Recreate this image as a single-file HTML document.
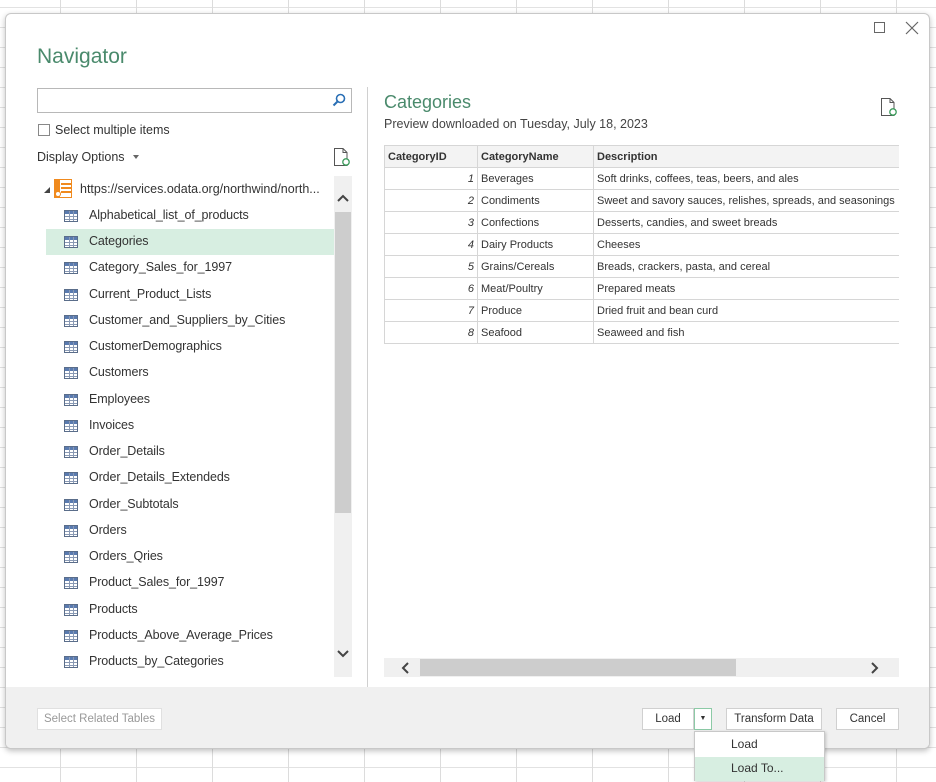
<!DOCTYPE html>
<html><head><meta charset="utf-8"><style>
*{margin:0;padding:0;box-sizing:border-box}
body{width:936px;height:782px;overflow:hidden;font-family:"Liberation Sans",sans-serif;color:#333;
background-color:#fff;
background-image:linear-gradient(90deg,#dcdcdc 1px,transparent 1px),linear-gradient(#e2e2e2 1px,transparent 1px);
background-size:76px 20px;background-position:60px 7px;position:relative}
.dlg{position:absolute;left:5px;top:13px;width:925px;height:736px;background:#fff;border:1px solid #c8c8c8;border-radius:6px;box-shadow:0 2px 6px rgba(0,0,0,.25);overflow:hidden}
.abs{position:absolute}
.foot{position:absolute;left:0;top:673px;width:100%;height:63px;background:#f0f0f0}
.t{font-size:12.5px;white-space:nowrap}
.item{position:absolute;left:40px;width:288px;height:26px}
.item .ic{position:absolute;left:18px;top:7px;width:14px;height:12px;border:1px solid #5a6d8a;background:
linear-gradient(90deg,transparent 4px,#8a9ab5 4px,#8a9ab5 5px,transparent 5px,transparent 8px,#8a9ab5 8px,#8a9ab5 9px,transparent 9px),
linear-gradient(#5a7bb0 3px,transparent 3px,transparent 5px,#8a9ab5 5px,#8a9ab5 6px,transparent 6px,transparent 8px,#8a9ab5 8px,#8a9ab5 9px,transparent 9px),#fff}
.item .tx{position:absolute;left:43px;top:5px;font-size:12.5px;color:#333;letter-spacing:-0.1px}
table{border-collapse:collapse;font-size:11px;position:absolute;left:378px;top:131px}
td{border:1px solid #d6d6d6;height:22px;padding:0 3px;white-space:nowrap}
th{border:1px solid #d6d6d6;height:22px;padding:0 3px;text-align:left;font-weight:bold;background:#f3f3f3;font-size:11px}
.btn{position:absolute;height:22px;border:1px solid #d0d0d0;background:#fff;font-size:11.5px;text-align:center;line-height:20px}
</style></head><body>
<div class="dlg">
<div class="abs" style="left:31px;top:31px;font-size:21px;color:#4a8a6c">Navigator</div>
<div class="abs" style="left:868px;top:8px;width:11px;height:11px;border:1px solid #666"></div>
<svg class="abs" style="left:899px;top:7px" width="14" height="14"><path d="M1 1L13 13M13 1L1 13" stroke="#666" stroke-width="1.2"/></svg>
<div class="abs" style="left:31px;top:74px;width:315px;height:25px;border:1px solid #b8b8b8"></div>
<svg class="abs" style="left:326px;top:79px" width="14" height="14"><circle cx="8.5" cy="5.5" r="4" fill="none" stroke="#2a6fb5" stroke-width="1.6"/><path d="M6 8L1.5 12.5" stroke="#2a6fb5" stroke-width="2"/></svg>
<div class="abs" style="left:32px;top:110px;width:12px;height:12px;border:1px solid #888"></div>
<div class="abs t" style="left:49px;top:109px">Select multiple items</div>
<div class="abs t" style="left:31px;top:136px">Display Options</div>
<div class="abs" style="left:127px;top:141px;border:3px solid transparent;border-top:4px solid #666"></div>
<svg class="abs" style="left:327px;top:133px" width="18" height="20"><path d="M1.5 1.5H10L14 5.5V18.5H1.5Z M10 1.5V5.5H14" fill="none" stroke="#555"/><circle cx="13" cy="15" r="3.2" fill="#fff" stroke="#3a9a5a" stroke-width="1.3"/></svg>
<div class="abs" style="left:38px;top:173px;border:3px solid transparent;border-right-color:#444;border-bottom-color:#444"></div>
<svg class="abs" style="left:48px;top:165px" width="18" height="19"><rect x="0.5" y="0.5" width="17" height="18" fill="#fff" stroke="#f08a1e"/><rect x="1" y="1" width="5" height="17" fill="#f08a1e"/><path d="M7 5H17M7 9H17M7 13H17" stroke="#f08a1e" stroke-width="2"/><circle cx="4" cy="15" r="2.5" fill="#fff" stroke="#f08a1e"/></svg>
<div class="abs t" style="left:74px;top:168px">https://services.odata.org/northwind/north...</div>
<div class="item" style="top:189px"><div class="ic"></div><div class="tx">Alphabetical_list_of_products</div></div>
<div class="item" style="top:215px;background:#d7eee1"><div class="ic"></div><div class="tx">Categories</div></div>
<div class="item" style="top:241px"><div class="ic"></div><div class="tx">Category_Sales_for_1997</div></div>
<div class="item" style="top:268px"><div class="ic"></div><div class="tx">Current_Product_Lists</div></div>
<div class="item" style="top:294px"><div class="ic"></div><div class="tx">Customer_and_Suppliers_by_Cities</div></div>
<div class="item" style="top:320px"><div class="ic"></div><div class="tx">CustomerDemographics</div></div>
<div class="item" style="top:346px"><div class="ic"></div><div class="tx">Customers</div></div>
<div class="item" style="top:373px"><div class="ic"></div><div class="tx">Employees</div></div>
<div class="item" style="top:399px"><div class="ic"></div><div class="tx">Invoices</div></div>
<div class="item" style="top:425px"><div class="ic"></div><div class="tx">Order_Details</div></div>
<div class="item" style="top:451px"><div class="ic"></div><div class="tx">Order_Details_Extendeds</div></div>
<div class="item" style="top:478px"><div class="ic"></div><div class="tx">Order_Subtotals</div></div>
<div class="item" style="top:504px"><div class="ic"></div><div class="tx">Orders</div></div>
<div class="item" style="top:530px"><div class="ic"></div><div class="tx">Orders_Qries</div></div>
<div class="item" style="top:556px"><div class="ic"></div><div class="tx">Product_Sales_for_1997</div></div>
<div class="item" style="top:583px"><div class="ic"></div><div class="tx">Products</div></div>
<div class="item" style="top:609px"><div class="ic"></div><div class="tx">Products_Above_Average_Prices</div></div>
<div class="item" style="top:635px"><div class="ic"></div><div class="tx">Products_by_Categories</div></div>
<div class="abs" style="left:328px;top:162px;width:18px;height:501px;background:#f0f0f0"></div>
<div class="abs" style="left:329px;top:198px;width:16px;height:301px;background:#cdcdcd"></div>
<svg class="abs" style="left:330px;top:179px" width="14" height="10"><path d="M2 8L7 3L12 8" fill="none" stroke="#444" stroke-width="2"/></svg>
<svg class="abs" style="left:330px;top:635px" width="14" height="10"><path d="M2 2L7 7L12 2" fill="none" stroke="#444" stroke-width="2"/></svg>
<div class="abs" style="left:361px;top:73px;width:1px;height:600px;background:#d0d0d0"></div>
<div class="abs" style="left:378px;top:78px;font-size:18px;color:#4a8a6c">Categories</div>
<div class="abs t" style="left:378px;top:103px;color:#444">Preview downloaded on Tuesday, July 18, 2023</div>
<svg class="abs" style="left:874px;top:83px" width="18" height="20"><path d="M1.5 1.5H10L14 5.5V18.5H1.5Z M10 1.5V5.5H14" fill="none" stroke="#555"/><circle cx="13" cy="15" r="3.2" fill="#fff" stroke="#3a9a5a" stroke-width="1.3"/></svg>
<div class="abs" style="left:378px;top:131px;width:515px;height:200px;overflow:hidden">
<table style="left:0;top:0;width:540px">
<tr><th style="width:93px">CategoryID</th><th style="width:116px">CategoryName</th><th>Description</th></tr>
<tr><td style="text-align:right;font-style:italic">1</td><td>Beverages</td><td>Soft drinks, coffees, teas, beers, and ales</td></tr>
<tr><td style="text-align:right;font-style:italic">2</td><td>Condiments</td><td>Sweet and savory sauces, relishes, spreads, and seasonings</td></tr>
<tr><td style="text-align:right;font-style:italic">3</td><td>Confections</td><td>Desserts, candies, and sweet breads</td></tr>
<tr><td style="text-align:right;font-style:italic">4</td><td>Dairy Products</td><td>Cheeses</td></tr>
<tr><td style="text-align:right;font-style:italic">5</td><td>Grains/Cereals</td><td>Breads, crackers, pasta, and cereal</td></tr>
<tr><td style="text-align:right;font-style:italic">6</td><td>Meat/Poultry</td><td>Prepared meats</td></tr>
<tr><td style="text-align:right;font-style:italic">7</td><td>Produce</td><td>Dried fruit and bean curd</td></tr>
<tr><td style="text-align:right;font-style:italic">8</td><td>Seafood</td><td>Seaweed and fish</td></tr>
</table></div>
<div class="abs" style="left:378px;top:644px;width:515px;height:19px;background:#f0f0f0"></div>
<div class="abs" style="left:414px;top:645px;width:316px;height:17px;background:#cdcdcd"></div>
<svg class="abs" style="left:394px;top:647px" width="10" height="14"><path d="M8 2L3 7L8 12" fill="none" stroke="#444" stroke-width="2"/></svg>
<svg class="abs" style="left:864px;top:647px" width="10" height="14"><path d="M2 2L7 7L2 12" fill="none" stroke="#444" stroke-width="2"/></svg>
<div class="foot"></div>
<div class="btn" style="left:31px;top:694px;width:125px;color:#999;border-color:#e0e0e0">Select Related Tables</div>
<div class="btn" style="left:636px;top:694px;width:52px">Load</div>
<div class="btn" style="left:688px;top:694px;width:18px;border-color:#8ccaa6;font-size:7px">▼</div>
<div class="btn" style="left:720px;top:694px;width:96px">Transform Data</div>
<div class="btn" style="left:830px;top:694px;width:63px">Cancel</div>
</div>
<div class="abs" style="left:694px;top:731px;width:131px;height:50px;background:#fff;border:1px solid #c8c8c8;box-shadow:1px 1px 3px rgba(0,0,0,.2)">
<div class="abs t" style="left:36px;top:5px;font-size:12px">Load</div>
<div class="abs" style="left:0;top:25px;width:129px;height:24px;background:#d7eee1"></div>
<div class="abs t" style="left:36px;top:29px;font-size:12px">Load To...</div>
</div>
</body></html>
